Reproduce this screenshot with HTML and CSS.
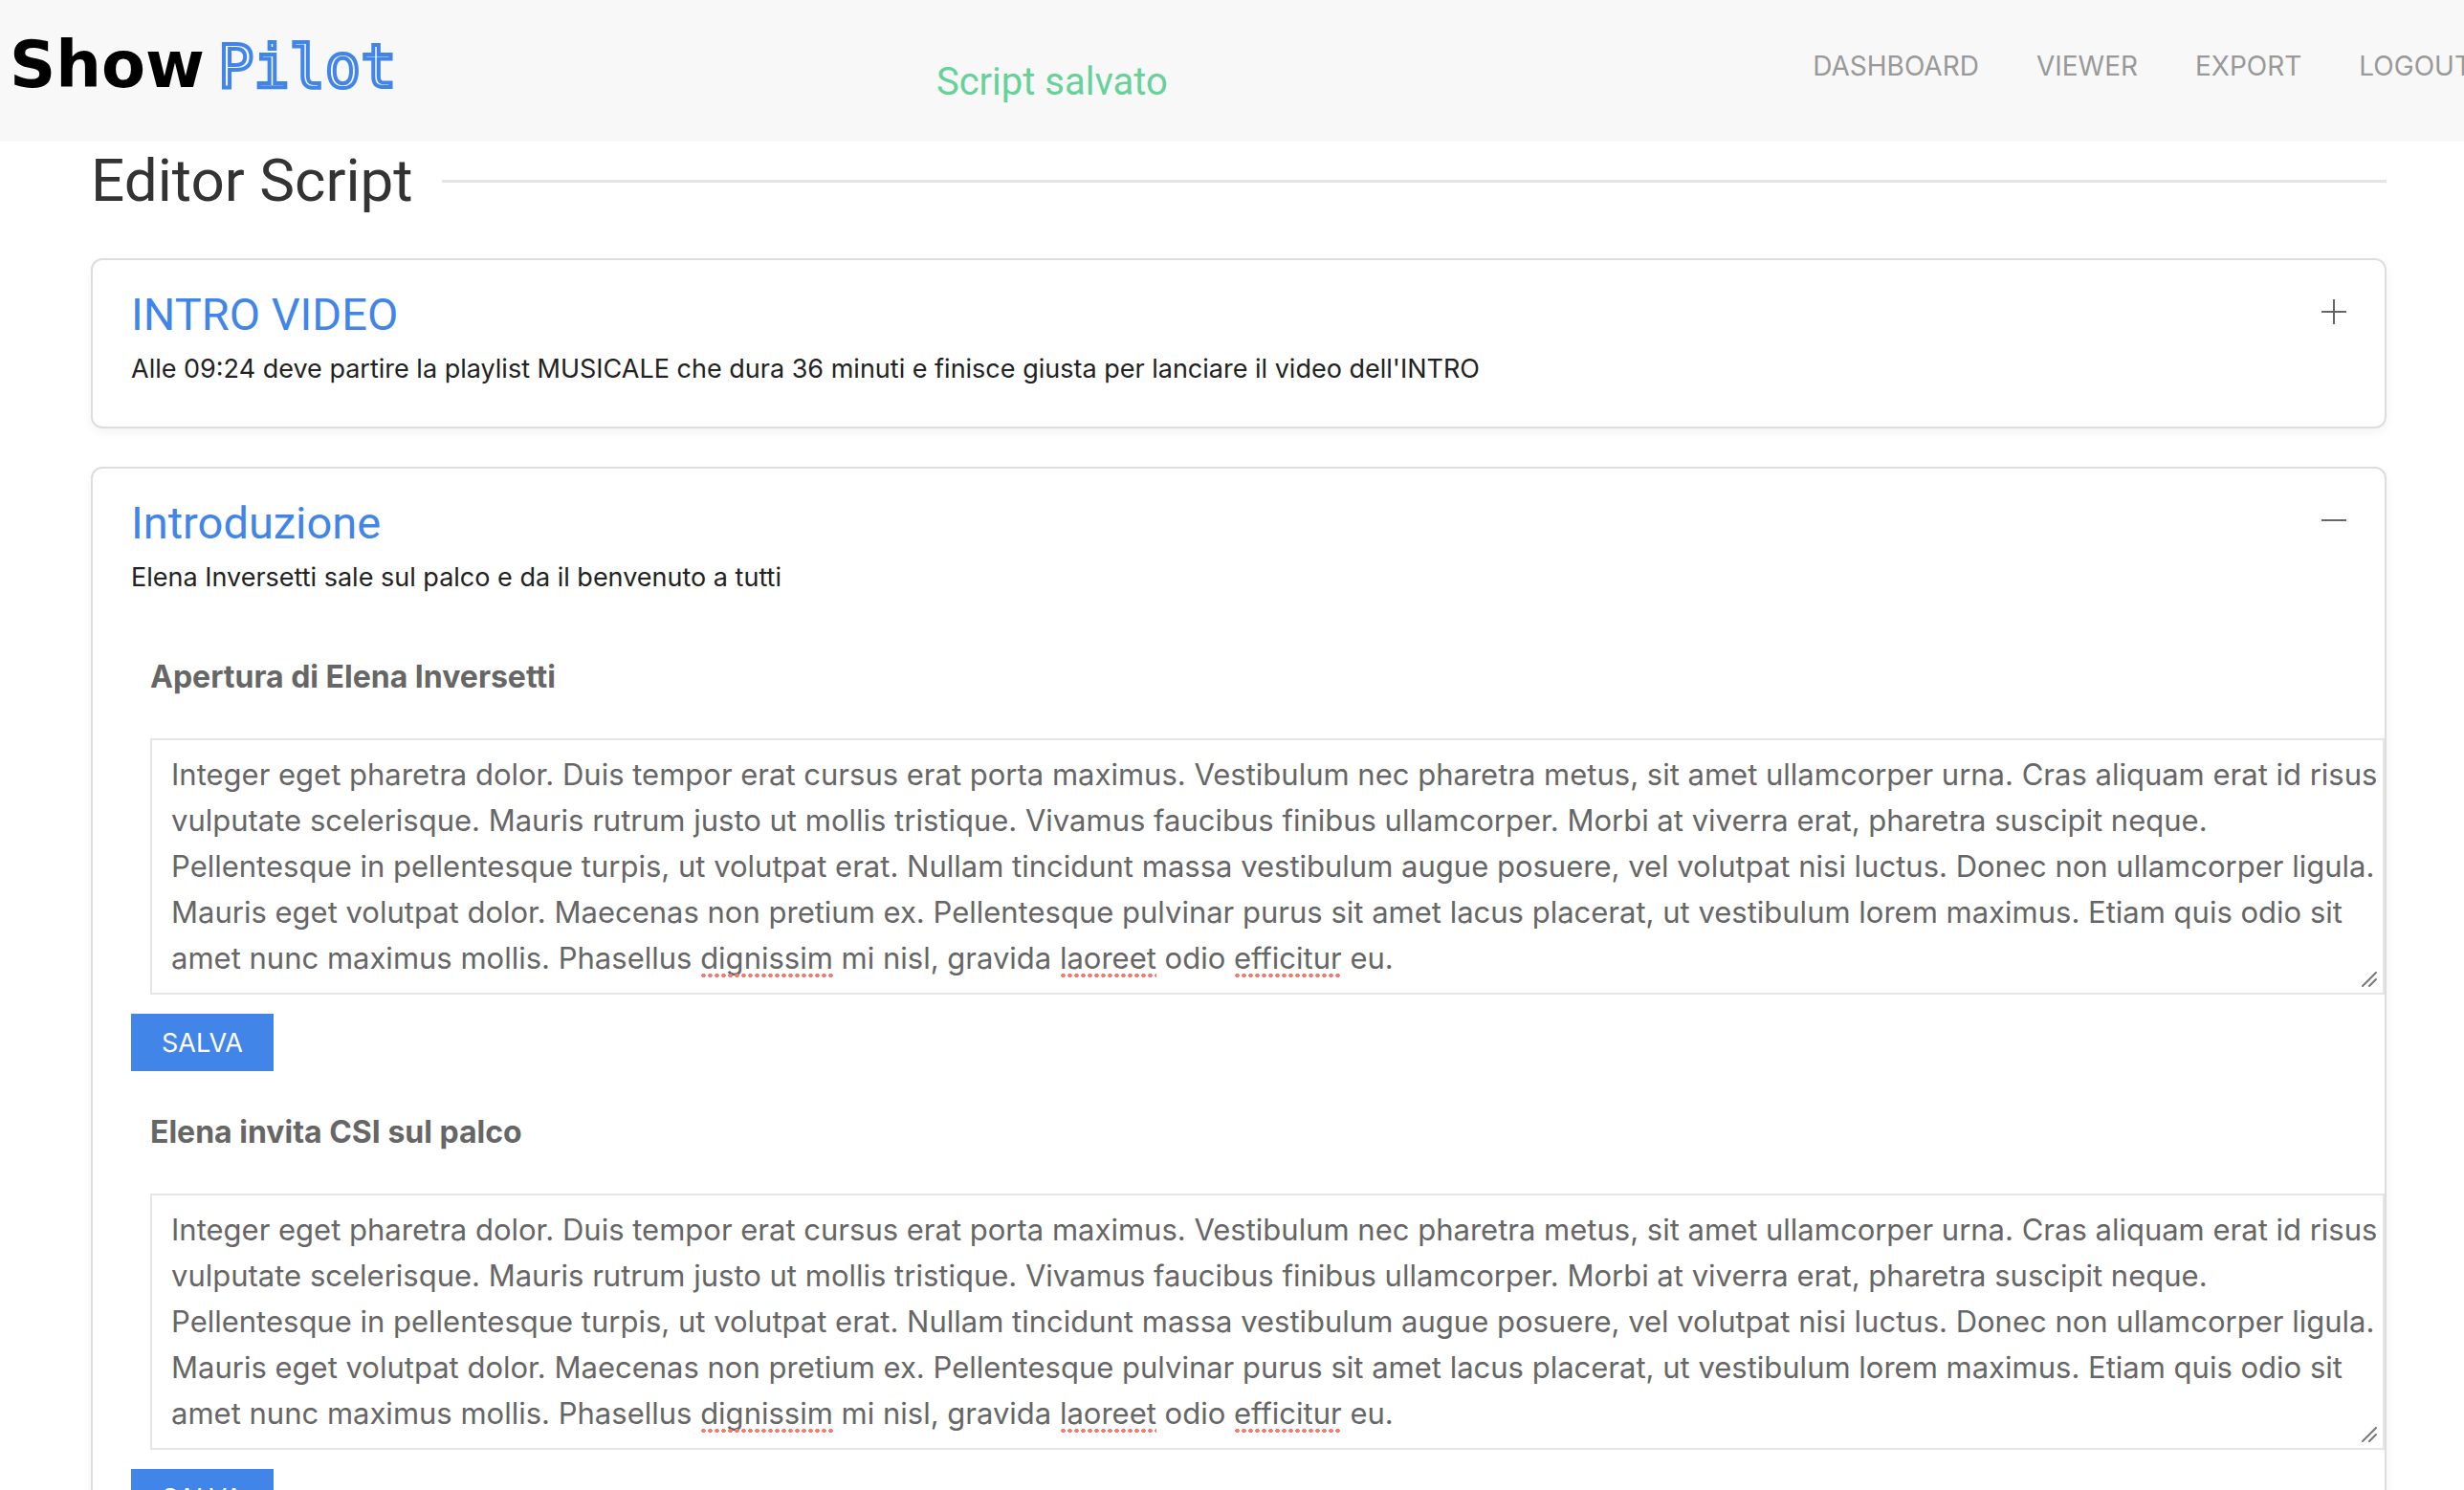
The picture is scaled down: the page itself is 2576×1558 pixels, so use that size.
FILE: index.html
```html
<!DOCTYPE html>
<html lang="it">
<head>
    <meta charset="UTF-8">
    <meta name="viewport" content="width=device-width, initial-scale=1.0">
    <title>Show Pilot - Editor Script</title>
    <link rel="stylesheet" href="styles.css">
</head>
<body>
    <header class="navbar">
        <a class="logo" href="#">Show <span class="logo-outline">Pilot</span></a>
        <div class="message" role="status">Script salvato</div>
        <nav class="menu">
            <a href="#">DASHBOARD</a>
            <a href="#">VIEWER</a>
            <a href="#">EXPORT</a>
            <a href="#">LOGOUT</a>
        </nav>
    </header>

    <main class="container">
        <h1 class="page-title">Editor Script</h1>

        <section class="card">
            <div class="card-header">
                <div>
                    <h2>INTRO VIDEO</h2>
                    <p>Alle 09:24 deve partire la playlist MUSICALE che dura 36 minuti e finisce giusta per lanciare il video dell'INTRO</p>
                </div>
                <button class="toggle" type="button" aria-label="Apri" aria-expanded="false">
                    <svg width="26" height="26" viewBox="0 0 26 26"><path d="M0 13H26M13 0V26" stroke="#666" stroke-width="2"/></svg>
                </button>
            </div>
        </section>

        <section class="card">
            <div class="card-header">
                <div>
                    <h2>Introduzione</h2>
                    <p>Elena Inversetti sale sul palco e da il benvenuto a tutti</p>
                </div>
                <button class="toggle" type="button" aria-label="Chiudi" aria-expanded="true">
                    <svg width="26" height="26" viewBox="0 0 26 26"><path d="M0 13H26" stroke="#666" stroke-width="2"/></svg>
                </button>
            </div>
            <div class="card-body">
                <form class="entry">
                    <label for="script1">Apertura di Elena Inversetti</label>
                    <div class="editor">
                        <textarea id="script1" rows="5" spellcheck="false">Integer eget pharetra dolor. Duis tempor erat cursus erat porta maximus. Vestibulum nec pharetra metus, sit amet ullamcorper urna. Cras aliquam erat id risus vulputate scelerisque. Mauris rutrum justo ut mollis tristique. Vivamus faucibus finibus ullamcorper. Morbi at viverra erat, pharetra suscipit neque. Pellentesque in pellentesque turpis, ut volutpat erat. Nullam tincidunt massa vestibulum augue posuere, vel volutpat nisi luctus. Donec non ullamcorper ligula. Mauris eget volutpat dolor. Maecenas non pretium ex. Pellentesque pulvinar purus sit amet lacus placerat, ut vestibulum lorem maximus. Etiam quis odio sit amet nunc maximus mollis. Phasellus dignissim mi nisl, gravida laoreet odio efficitur eu.</textarea>
                        <svg class="grip" width="16" height="16" viewBox="0 0 16 16"><path d="M1 15L15 1M8 15L15 8" stroke="#777" stroke-width="2" stroke-linecap="round"/></svg>
                    </div>
                    <button class="save" type="button">SALVA</button>
                </form>
                <form class="entry">
                    <label for="script2">Elena invita CSI sul palco</label>
                    <div class="editor">
                        <textarea id="script2" rows="5" spellcheck="false">Integer eget pharetra dolor. Duis tempor erat cursus erat porta maximus. Vestibulum nec pharetra metus, sit amet ullamcorper urna. Cras aliquam erat id risus vulputate scelerisque. Mauris rutrum justo ut mollis tristique. Vivamus faucibus finibus ullamcorper. Morbi at viverra erat, pharetra suscipit neque. Pellentesque in pellentesque turpis, ut volutpat erat. Nullam tincidunt massa vestibulum augue posuere, vel volutpat nisi luctus. Donec non ullamcorper ligula. Mauris eget volutpat dolor. Maecenas non pretium ex. Pellentesque pulvinar purus sit amet lacus placerat, ut vestibulum lorem maximus. Etiam quis odio sit amet nunc maximus mollis. Phasellus dignissim mi nisl, gravida laoreet odio efficitur eu.</textarea>
                        <svg class="grip" width="16" height="16" viewBox="0 0 16 16"><path d="M1 15L15 1M8 15L15 8" stroke="#777" stroke-width="2" stroke-linecap="round"/></svg>
                    </div>
                    <button class="save" type="button">SALVA</button>
                </form>
            </div>
        </section>
    </main>

    <script src="script.js"></script>
</body>
</html>
```
FILE: styles.css
```css
* {
    box-sizing: border-box;
}
body {
    margin: 0;
    font-family: Inter, "Liberation Sans", sans-serif;
    font-size: 31px;
    line-height: 48px;
    color: #666;
    background: #fff;
    overflow-x: hidden;
}
h1, h2, p {
    margin: 0;
    font-weight: 400;
}
h1, h2, .message {
    font-family: Roboto, "Liberation Sans", sans-serif;
}
button {
    border: none;
    font-family: inherit;
    cursor: pointer;
}

/* navbar */
.navbar {
    display: grid;
    grid-template-columns: 38% 1fr auto;
    height: 148px;
    background: #f8f8f8;
    overflow: hidden;
    white-space: nowrap;
}
.logo {
    display: flex;
    align-items: baseline;
    gap: 14px;
    padding: 28px 0 0 10px;
    font-family: "DejaVu Sans", sans-serif;
    font-size: 67px;
    font-weight: 700;
    line-height: 80px;
    color: #000;
    text-decoration: none;
}
.logo-outline {
    font-family: "DejaVu Sans Mono", monospace;
    font-size: 62px;
    font-weight: 400;
    color: #f8f8f8;
    -webkit-text-stroke: 4px #4285e8;
}
.message {
    padding-top: 62px;
    font-size: 40px;
    color: #66d199;
}
.menu {
    display: flex;
    gap: 60px;
    margin-right: -8px;
    padding-top: 45px;
    font-size: 28px;
}
.menu a {
    color: #999;
    text-decoration: none;
}

/* page */
.container {
    padding: 0 81px 40px 95px;
}
.page-title {
    display: flex;
    align-items: center;
    gap: 30px;
    margin-bottom: 40px;
    font-size: 62px;
    line-height: 82px;
    color: #333;
}
.page-title::after {
    content: "";
    flex: 1;
    border-bottom: 3px solid #e5e5e5;
}

/* card */
.card {
    margin-bottom: 40px;
    border: 2px solid #ddd;
    border-radius: 12px;
    box-shadow: 0 4px 12px rgba(0, 0, 0, 0.05);
}
.card-header {
    display: flex;
    justify-content: space-between;
    align-items: flex-start;
    padding: 26px 40px 40px;
}
.card-header h2 {
    margin-bottom: 6px;
    font-size: 47px;
    line-height: 62px;
    color: #4285e8;
}
.card-header p {
    font-size: 27px;
    line-height: 40px;
    color: #222;
}
.toggle {
    display: flex;
    padding: 15px 0;
    background: none;
}
.card-body {
    display: flex;
    flex-direction: column;
    gap: 40px;
    padding: 20px 0 40px 40px;
}

/* script entry */
.entry label {
    display: block;
    margin: 0 20px 40px;
    font-size: 32px;
    font-weight: 700;
}
.editor {
    position: relative;
    margin-left: 20px;
}
.editor textarea,
.editor .mirror {
    display: block;
    width: 100%;
    padding: 12px 0 12px 20px;
    border: 2px solid #e5e5e5;
    font: inherit;
    color: #666;
}
.editor textarea {
    background: #fff;
    outline: none;
    overflow: hidden;
    resize: vertical;
}
.editor textarea::-webkit-resizer {
    display: none;
}
.editor .mirror {
    position: absolute;
    top: 0;
    left: 0;
    visibility: hidden;
}
.misspelled {
    position: absolute;
    height: 4px;
    background: radial-gradient(circle, #f47b70 50%, transparent 60%) 0 0 / 7px 4px repeat-x;
    pointer-events: none;
}
.grip {
    position: absolute;
    right: 8px;
    bottom: 8px;
    pointer-events: none;
}
.save {
    display: block;
    height: 60px;
    margin-top: 20px;
    padding: 0 32px;
    background: #4285e8;
    color: #fff;
    font-size: 27px;
}
```
FILE: script.js
```js
// words underlined as unknown by the spell checker
const unknownWords = /(dignissim|laoreet|efficitur)/g;

function underlineWords(editor) {
    const textarea = editor.querySelector('textarea');
    editor.querySelectorAll('.misspelled').forEach((el) => el.remove());

    // copy the text in a hidden box to measure where the words are
    const mirror = document.createElement('div');
    mirror.className = 'mirror';
    textarea.value.split(unknownWords).forEach((part) => {
        const span = document.createElement('span');
        span.textContent = part;
        mirror.appendChild(span);
    });
    editor.appendChild(mirror);

    const lines = [];
    mirror.querySelectorAll('span:nth-child(even)').forEach((word) => {
        const line = document.createElement('div');
        line.className = 'misspelled';
        line.style.left = word.offsetLeft + 2 + 'px';
        line.style.top = word.offsetTop + word.offsetHeight + 'px';
        line.style.width = word.offsetWidth + 'px';
        lines.push(line);
    });
    mirror.remove();
    editor.append(...lines);
}

function underlineAll() {
    document.querySelectorAll('.editor').forEach(underlineWords);
}

document.querySelectorAll('.editor textarea').forEach((textarea) => {
    textarea.addEventListener('input', () => underlineWords(textarea.parentElement));
});
window.addEventListener('resize', underlineAll);
underlineAll();
```
